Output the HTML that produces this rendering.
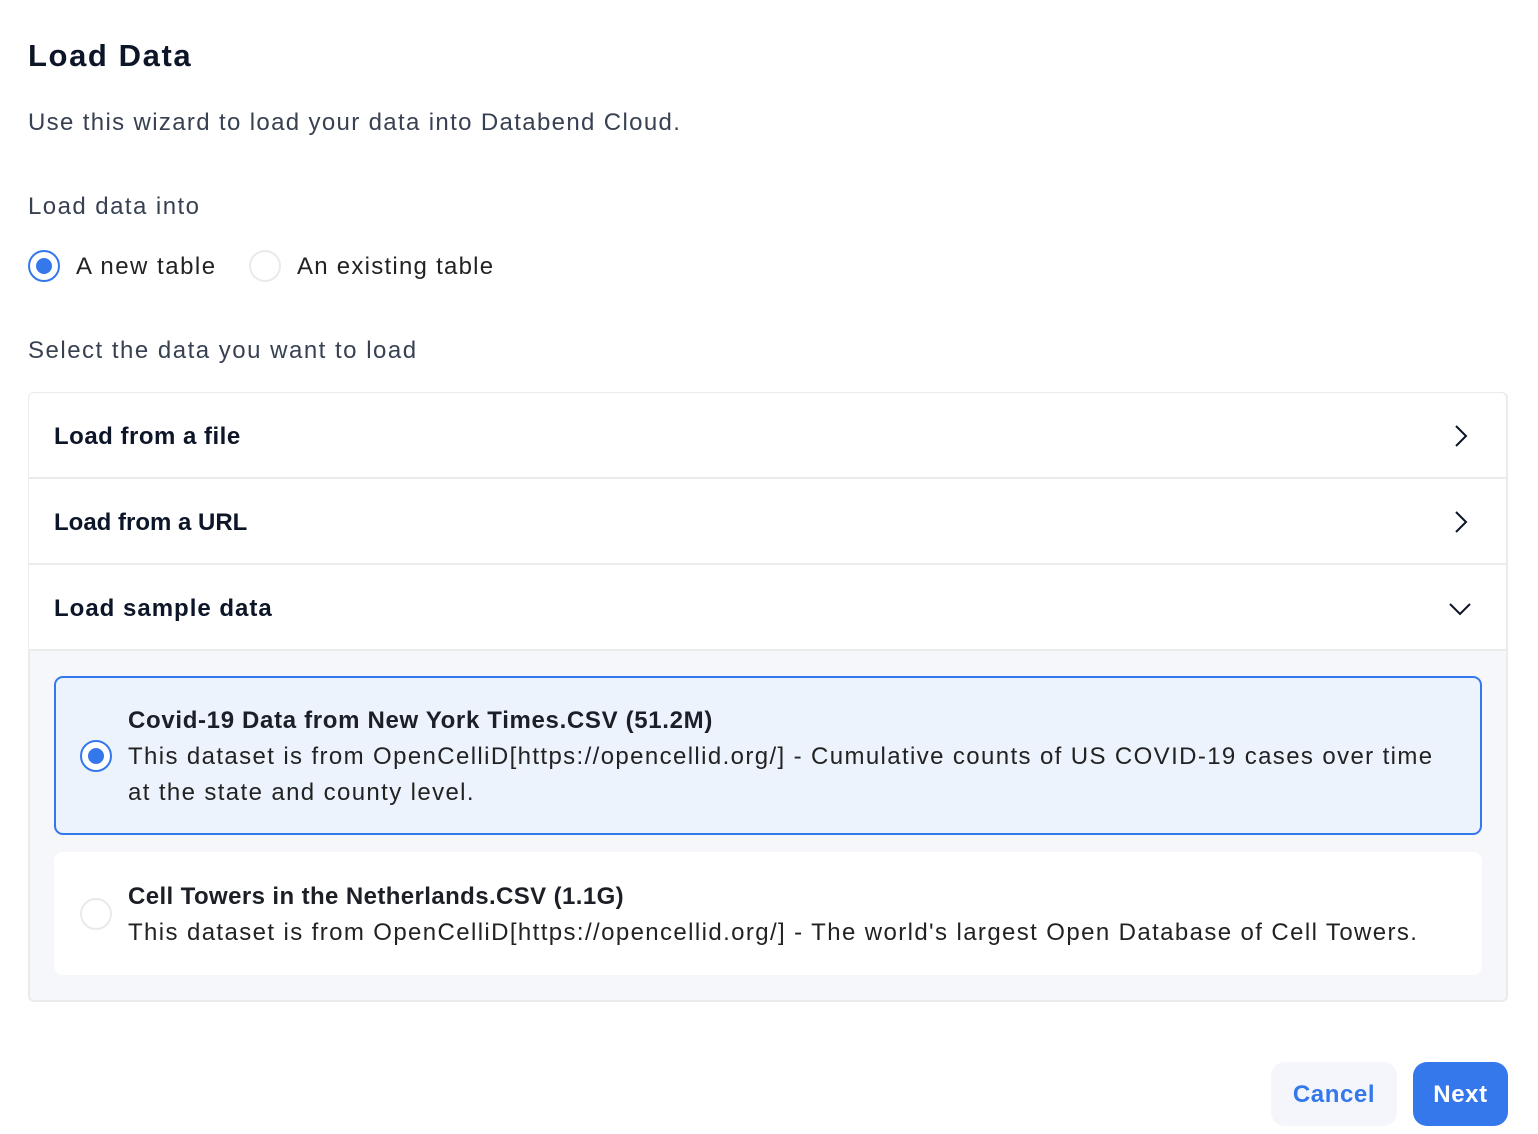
<!DOCTYPE html>
<html><head><style>
*{margin:0;padding:0;box-sizing:border-box}
body{width:1538px;height:1134px;background:#fff;font-family:"Liberation Sans",sans-serif;position:relative;overflow:hidden;color:#384152}
.a{position:absolute;white-space:nowrap}
.t{font-size:24px;letter-spacing:1.4px}
.b{font-weight:bold;color:#0d1528}
.radio{position:absolute;width:32px;height:32px;border-radius:50%;border:2px solid #e9eaee;background:#fff}
.radio.on{border-color:#3478ec}
.radio.on::after{content:"";position:absolute;left:6px;top:6px;width:16px;height:16px;border-radius:50%;background:#3478ec}
.row{position:absolute;left:29px;width:1477px;height:86px;border-bottom:2px solid #ebebeb;background:#fff}
.row span{position:absolute;left:25px;top:30px;font-size:24px;font-weight:bold;color:#0d1528;letter-spacing:0.3px}
.row svg{position:absolute}
</style></head><body>
<div class="a b" style="left:28px;top:38px;font-size:31px;letter-spacing:1.6px">Load Data</div>
<div class="a t" style="left:28px;top:109px;letter-spacing:1.35px">Use this wizard to load your data into Databend Cloud.</div>
<div class="a t" style="left:28px;top:193px;letter-spacing:1.45px">Load data into</div>
<div class="radio on" style="left:28px;top:250px"></div>
<div class="a t" style="left:76px;top:253px;color:#222;letter-spacing:1.5px">A new table</div>
<div class="radio" style="left:249px;top:250px"></div>
<div class="a t" style="left:297px;top:253px;color:#222;letter-spacing:1.25px">An existing table</div>
<div class="a t" style="left:28px;top:337px;letter-spacing:1.5px">Select the data you want to load</div>

<div style="position:absolute;left:28px;top:392px;width:1480px;height:610px;border:2px solid #ebebeb;border-radius:6px;background:#f6f7fb;overflow:hidden"></div>
<div class="row" style="top:393px;border-radius:5px 5px 0 0"><span style="letter-spacing:0.5px">Load from a file</span>
<svg style="left:1424px;top:31px" width="16" height="24" viewBox="0 0 16 24"><path d="M3 2 L13 12 L3 22" fill="none" stroke="#0d1528" stroke-width="2"/></svg></div>
<div class="row" style="top:479px"><span style="letter-spacing:0">Load from a URL</span>
<svg style="left:1424px;top:31px" width="16" height="24" viewBox="0 0 16 24"><path d="M3 2 L13 12 L3 22" fill="none" stroke="#0d1528" stroke-width="2"/></svg></div>
<div class="row" style="top:565px"><span style="letter-spacing:1px">Load sample data</span>
<svg style="left:1419px;top:36px" width="24" height="16" viewBox="0 0 24 16"><path d="M2 3 L12 13 L22 3" fill="none" stroke="#0d1528" stroke-width="2"/></svg></div>

<div style="position:absolute;left:54px;top:676px;width:1428px;height:159px;border:2px solid #3478ec;border-radius:9px;background:#ecf3fd"></div>
<div class="radio on" style="left:80px;top:740px"></div>
<div class="a b" style="left:128px;top:707px;font-size:24px;color:#1c1f26;letter-spacing:0.67px">Covid-19 Data from New York Times.CSV (51.2M)</div>
<div class="a t" style="left:128px;top:743px;color:#222;letter-spacing:1.38px">This dataset is from OpenCelliD[https://opencellid.org/] - Cumulative counts of US COVID-19 cases over time</div>
<div class="a t" style="left:128px;top:779px;color:#222;letter-spacing:1.38px">at the state and county level.</div>

<div style="position:absolute;left:54px;top:852px;width:1428px;height:123px;border-radius:9px;background:#fff"></div>
<div class="radio" style="left:80px;top:898px"></div>
<div class="a b" style="left:128px;top:883px;font-size:24px;color:#1c1f26;letter-spacing:0.4px">Cell Towers in the Netherlands.CSV (1.1G)</div>
<div class="a t" style="left:128px;top:919px;color:#222;letter-spacing:1.39px">This dataset is from OpenCelliD[https://opencellid.org/] - The world's largest Open Database of Cell Towers.</div>

<div style="position:absolute;left:1271px;top:1062px;width:126px;height:64px;border-radius:14px;background:#f4f6fb;color:#3478ec;font-size:24px;font-weight:bold;text-align:center;line-height:66px;letter-spacing:0.6px">Cancel</div>
<div style="position:absolute;left:1413px;top:1062px;width:95px;height:64px;border-radius:14px;background:#3478ec;color:#fff;font-size:24px;font-weight:bold;text-align:center;line-height:66px;letter-spacing:0.6px">Next</div>
</body></html>
